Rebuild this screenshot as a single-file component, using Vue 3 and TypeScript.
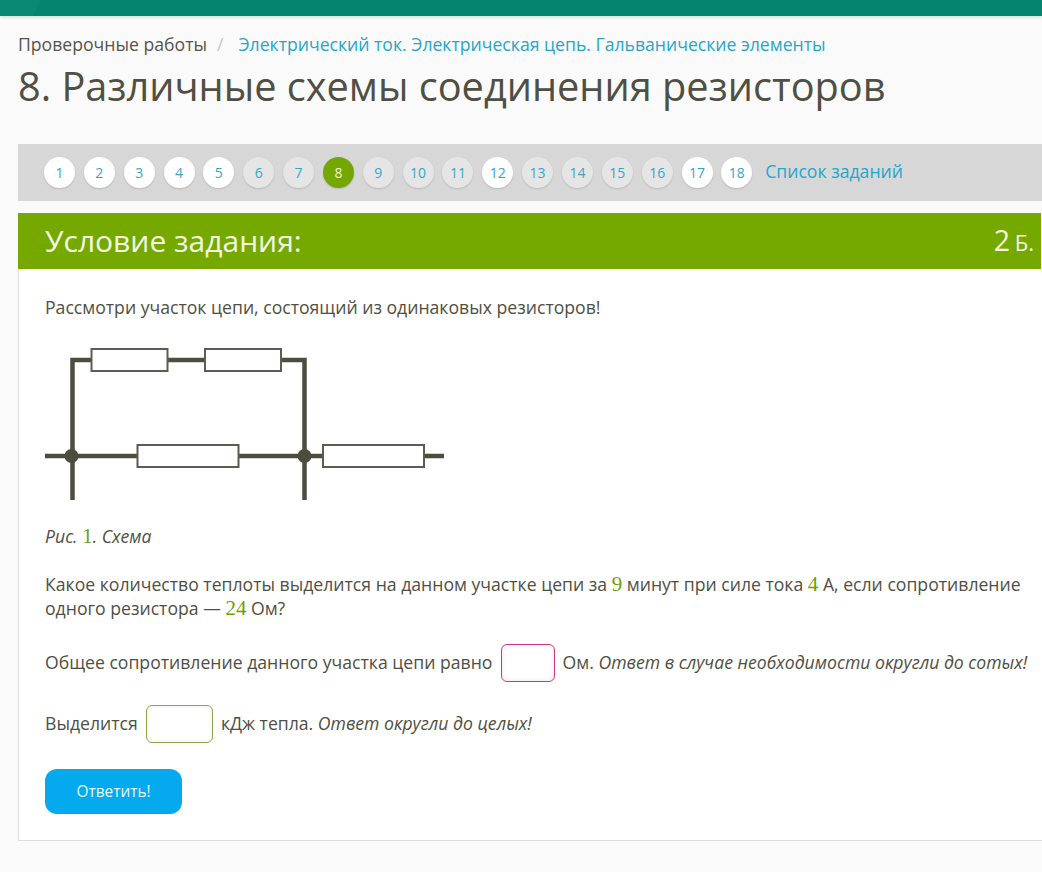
<script setup lang="ts">
interface Step { n: number; state: 'done' | 'idle' | 'active' }
const doneSet = [1, 2, 3, 4, 5, 12, 17, 18]
const steps: Step[] = Array.from({ length: 18 }, (_, i) => {
  const n = i + 1
  return { n, state: n === 8 ? 'active' : doneSet.includes(n) ? 'done' : 'idle' }
})
</script>

<template>
  <div class="page">
    <div class="topbar"></div>
    <div class="crumbs">
      <span class="crumb-root">Проверочные работы</span>
      <span class="sep">/</span>
      <a class="link">Электрический ток. Электрическая цепь. Гальванические элементы</a>
    </div>
    <h1 class="title">8. Различные схемы соединения резисторов</h1>

    <nav class="steps">
      <a v-for="s in steps" :key="s.n" class="step" :class="s.state">{{ s.n }}</a>
      <a class="link list">Список заданий</a>
    </nav>

    <section class="card">
      <header class="card-head">
        <h2>Условие задания:</h2>
        <div class="score"><span class="score-n">2</span> <span class="score-u">Б.</span></div>
      </header>
      <div class="card-body">
        <p class="intro">Рассмотри участок цепи, состоящий из одинаковых резисторов!</p>
        <svg class="scheme" width="400" height="162" viewBox="0 0 400 162">
          <g fill="none" stroke="#4d4d3e" stroke-width="4.500">
            <path d="M27.5 162V22H259.500V162" />
            <path d="M0 118H399" />
          </g>
          <circle cx="26.500" cy="118" r="7" fill="#4d4d3e" />
          <circle cx="259.500" cy="118" r="7" fill="#4d4d3e" />
          <g fill="#fff" stroke="#5c5c4f" stroke-width="2">
            <rect x="46.500" y="11" width="76" height="22" />
            <rect x="160" y="11" width="76" height="22" />
            <rect x="92.500" y="107" width="101" height="22" />
            <rect x="278" y="107" width="101" height="22" />
          </g>
        </svg>
        <p class="caption"><em>Рис. <span class="num">1</span>. Схема</em></p>
        <p class="question">
          Какое количество теплоты выделится на данном участке цепи за <span class="num">9</span> минут при силе тока <span class="num">4</span> А, если сопротивление<br />одного резистора — <span class="num">24</span> Ом?
        </p>
        <p class="answer first">Общее сопротивление данного участка цепи равно <input class="field pink" type="text" /> Ом. <em>Ответ в случае необходимости округли до сотых!</em></p>
        <p class="answer second">Выделится <input class="field green" type="text" /> кДж тепла. <em>Ответ округли до целых!</em></p>
        <button class="submit" type="button">Ответить!</button>
      </div>
    </section>
  </div>
</template>

<style>
html, body { margin: 0; background: #fafafa; overflow: hidden; }
</style>

<style scoped>
.page {
  width: 1042px;
  height: 872px;
  overflow: hidden;
  background: #fafafa;
  color: #4f4f44;
  font-family: "Open Sans", sans-serif;
  font-size: 17.640px;
}
.topbar {
  height: 16px;
  background: linear-gradient(115deg, #0a8a74 0 36px, #05856f 37px);
  box-shadow: 0 2px 2px #d5ebe6;
}
.crumbs {
  margin: 16px 0 0 18px;
  line-height: 25px;
  white-space: nowrap;
}
.crumb-root { color: #55554b; }
.sep { color: #c4c4c4; margin: 0 15px 0 10px; }
.link { color: #25a6cb; }
.title {
  margin: 2px 0 0 18px;
  font-size: 39.700px;
  font-weight: 400;
  line-height: 54px;
  color: #4f4f44;
  white-space: nowrap;
}
.steps {
  margin: 31px 0 0 18px;
  height: 57px;
  background: #d7d7d7;
  display: flex;
  align-items: center;
  padding-left: 26px;
  gap: 8.850px;
}
.step {
  width: 31px;
  height: 31px;
  border-radius: 50%;
  display: flex;
  align-items: center;
  justify-content: center;
  font-size: 14px;
  color: #38a5c8;
  flex: none;
  box-shadow: 0 1px 2px rgba(0, 0, 0, 0.14);
}
.step.done { background: #fff; }
.step.idle { background: #e5e5e5; }
.step.active { background: #74a800; color: #f0f6d8; }
.list { margin-left: 4px; white-space: nowrap; margin-bottom: 3px; }
.card {
  margin: 12px 0 0 18px;
  width: 1100px;
  height: 628px;
  box-sizing: border-box;
  background: #fff;
  border-left: 1px solid #dcdcdc;
  border-bottom: 1px solid #dcdcdc;
}
.card-head {
  height: 56px;
  width: 1023px;
  margin-left: -1px;
  padding: 0 7px 2px 27px;
  box-sizing: border-box;
  background: #75a900;
  color: #f3f8e2;
  display: flex;
  align-items: center;
  justify-content: space-between;
}
.card-head h2 {
  margin: 0;
  font-size: 30px;
  font-weight: 400;
  white-space: nowrap;
}
.score-n { font-size: 28.500px; }
.score-u { font-size: 22px; }
.card-body {
  padding: 26px 0 0 26px;
  white-space: nowrap;
}
p { margin: 0; }
.intro { line-height: 25px; }
.scheme { display: block; margin-top: 18px; }
.caption { margin-top: 24px; line-height: 25px; }
.num {
  font-family: "Liberation Serif", serif;
  font-style: normal;
  font-size: 21px;
  line-height: 1;
  color: #6f9f00;
}
.question { margin-top: 23px; line-height: 24px; }
.answer { line-height: 38px; }
.answer.first { margin-top: 23px; }
.answer.second { margin-top: 22px; }
.field {
  box-sizing: border-box;
  height: 38px;
  margin: 0 3.500px;
  padding: 0;
  font: inherit;
  vertical-align: -1px;
  border-radius: 6px;
  background: #fff;
  outline: none;
}
.field.pink { width: 54px; border: 1.500px solid #c8387f; box-shadow: inset 0 0 4px rgba(200, 56, 127, 0.18); }
.field.green { width: 67px; border: 1.500px solid #8aa84a; box-shadow: inset 0 0 4px rgba(138, 168, 74, 0.18); }
.submit {
  display: block;
  margin-top: 26px;
  width: 137px;
  height: 45px;
  border: none;
  border-radius: 12px;
  background: #05aaee;
  color: #e8f8ff;
  font-family: "Open Sans", sans-serif;
  font-size: 15.400px;
  padding: 0;
}
</style>
